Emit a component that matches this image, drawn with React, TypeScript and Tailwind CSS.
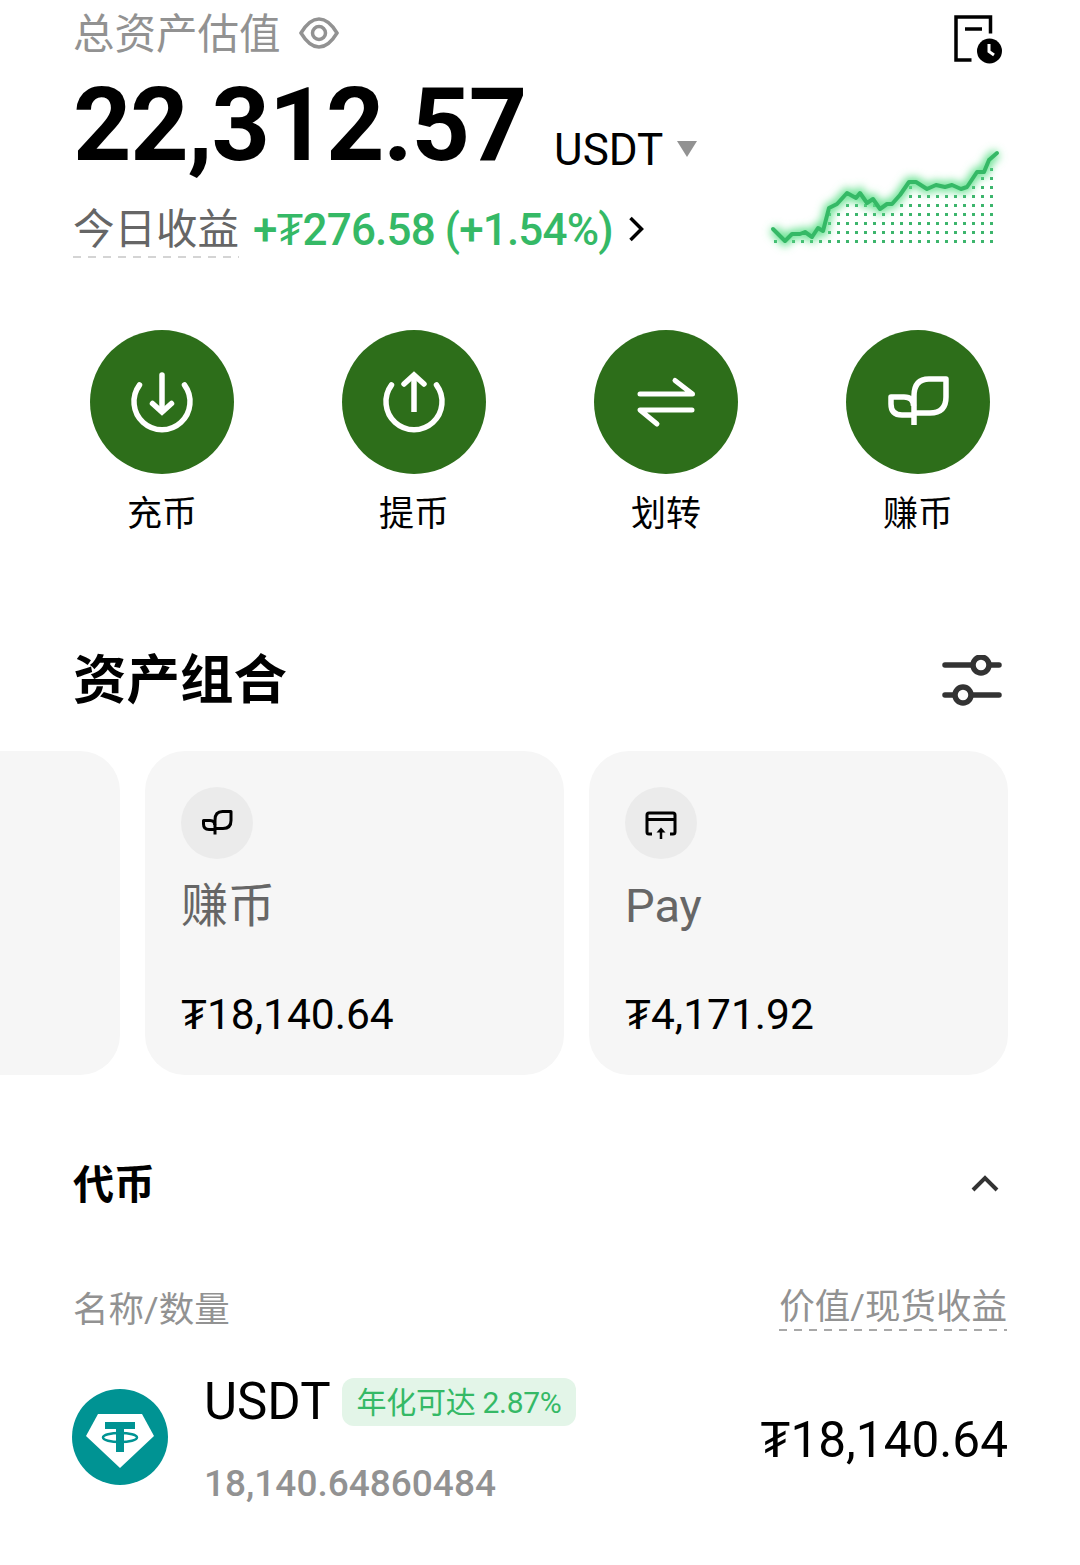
import { ReactNode } from "react";

const sans = "font-['Roboto','Noto_Sans_CJK_SC',sans-serif]";

// sparkline points for today's earnings
const line: [number, number][] = [
  [23, 229], [35, 241], [42, 234], [50, 234], [55, 232], [62, 237], [68, 228], [73, 231],
  [79, 208], [87, 204], [97, 193], [106, 198], [110, 193], [117, 203], [123, 199], [130, 209],
  [137, 204], [142, 204], [150, 195], [159, 182], [166, 182], [177, 189], [186, 185], [195, 187],
  [202, 185], [211, 189], [217, 187], [227, 172], [234, 172], [239, 160], [247, 153],
];

const lineY = (x: number) => {
  for (let i = 0; i < line.length - 1; i++) {
    const [x0, y0] = line[i];
    const [x1, y1] = line[i + 1];
    if (x >= x0 && x <= x1) return y0 + ((y1 - y0) * (x - x0)) / (x1 - x0);
  }
  return 0;
};

const dots: [number, number][] = [];
for (let col = 0; col < 25; col++) {
  for (let row = 0; row < 9; row++) {
    const x = 25.5 + col * 9;
    const y = 241.5 - row * 9;
    if (y > lineY(x) + 4) dots.push([x, y]);
  }
}

const Sparkline = () => (
  <svg width="240" height="110" viewBox="15 145 240 110" className="overflow-visible">
    <defs>
      <filter id="glow" x="-10%" y="-30%" width="120%" height="160%">
        <feGaussianBlur stdDeviation="4.500" />
      </filter>
    </defs>
    {dots.map(([x, y]) => (
      <rect key={`${x}-${y}`} x={x - 1.5} y={y - 1.5} width="3" height="3" fill="#3cb56c" />
    ))}
    <polyline
      points={line.map((p) => p.join(",")).join(" ")}
      fill="none"
      stroke="#5fe08a"
      strokeWidth="9"
      filter="url(#glow)"
    />
    <polyline
      points={line.map((p) => p.join(",")).join(" ")}
      fill="none"
      stroke="#35b966"
      strokeWidth="4"
      strokeLinejoin="round"
      strokeLinecap="round"
    />
  </svg>
);

const RecordIcon = () => (
  <svg width="50" height="50" viewBox="0 0 50 50" className="shrink-0">
    <path d="M17.5 45H2V2h34.500v16.500" fill="none" stroke="#000" strokeWidth="3.500" />
    <path d="M11 14h17" stroke="#000" strokeWidth="3.500" fill="none" />
    <circle cx="35.500" cy="36" r="12.500" fill="#000" />
    <path d="M35 29v7.500l5 3.500" stroke="#fff" strokeWidth="3" fill="none" />
  </svg>
);

const DepositIcon = () => (
  <g fill="none" stroke="#fff" strokeWidth="5.500" strokeLinecap="round">
    <path d="M49.500 55A28 28 0 1 0 94.500 55" />
    <path d="M72 45v36" />
    <path d="M62.500 73.500 72 82l9.500-8.500" />
  </g>
);

const WithdrawIcon = () => (
  <g fill="none" stroke="#fff" strokeWidth="5.500" strokeLinecap="round">
    <path d="M49.500 55A28 28 0 1 0 94.500 55" />
    <path d="M72 45v37" strokeLinecap="butt" />
    <path d="M62 54l10-9 10 9" />
  </g>
);

const TransferIcon = () => (
  <g fill="none" stroke="#fff" strokeWidth="5" strokeLinecap="round" strokeLinejoin="round">
    <path d="M46 64h52.500L81 50.500" />
    <path d="M98 80H46l17 14" />
  </g>
);

// two-leaf sprout, shared by the action button and the card badge
const LeafIcon = ({ color = "#fff", width = 5.5 }: { color?: string; width?: number }) => (
  <g fill="none" stroke={color} strokeWidth={width} strokeLinejoin="round">
    <path d="M68 95V66q0-17 15-17h17v18q0 16-16 16H68" />
    <path d="M67.500 85H56q-11 0-11-11v-7h13q9.500 0 9.500 9" />
  </g>
);

const PayIcon = () => (
  <g fill="none" stroke="#000" strokeWidth="3">
    <path d="M27 47h-3a2 2 0 0 1-2-2V28a2 2 0 0 1 2-2h24a2 2 0 0 1 2 2v17a2 2 0 0 1-2 2h-3" />
    <path d="M22 32.500h28" />
    <path d="M36 52v-7" strokeWidth="2.500" />
    <path d="M31.500 45.500h9L36 40.500z" fill="#000" stroke="none" />
  </g>
);

const ActionButton = ({ label, children }: { label: string; children: ReactNode }) => (
  <div className="flex w-[252px] flex-col items-center">
    <svg width="144" height="144" viewBox="0 0 144 144">
      <circle cx="72" cy="72" r="72" fill="#2d6e1a" />
      {children}
    </svg>
    <span className="mt-[21px] text-[35px] leading-[40px] text-black">{label}</span>
  </div>
);

const AssetCard = ({ label, value, children }: { label: string; value: string; children: ReactNode }) => (
  <div className="flex h-[324px] w-[419px] shrink-0 flex-col rounded-[40px] bg-[#f6f6f6] pl-[36px] pt-[36px]">
    <svg width="72" height="72" viewBox="0 0 72 72">
      <circle cx="36" cy="36" r="36" fill="#ebebeb" />
      {children}
    </svg>
    <span className="mt-[17px] text-[47px] leading-[60px] text-[#666]">{label}</span>
    <span className="mt-[54px] text-[42.5px] leading-[50px] text-black">{value}</span>
  </div>
);

const DashedRule = ({ color }: { color: string }) => (
  <div className={`h-[2px] w-full ${color}`} />
);

export default function App() {
  return (
    <div className={`h-[1565px] w-[1080px] overflow-hidden bg-white ${sans}`}>
      {/* balance header */}
      <div className="flex h-[270px] justify-between pl-[73px] pr-[76px]">
        <div className="flex flex-col">
          <div className="flex h-[66px] items-center gap-[18px]">
            <span className="mt-[3px] text-[41.5px] leading-[66px] text-[#929292]">总资产估值</span>
            <svg width="40" height="32" viewBox="0 0 40 32" fill="none" stroke="#929292" strokeWidth="3.500">
              <path d="M2 16C8 6 14 2 20 2s12 4 18 14c-6 10-12 14-18 14S8 26 2 16z" />
              <circle cx="20" cy="16" r="6.500" />
            </svg>
          </div>
          <div className="mt-[4px] flex h-[110px] items-end">
            <span className="text-[102px] font-bold leading-[110px] tracking-[-1.25px] text-black">22,312.57</span>
            <span className="mb-[5px] ml-[28px] text-[44px] leading-[50px] text-black">USDT</span>
            <svg className="mb-[23px] ml-[14px]" width="20" height="16" viewBox="0 0 20 16">
              <path d="M0 0h20L10 16z" fill="#929292" />
            </svg>
          </div>
          <div className="mt-[23px] flex items-center">
            <div className="flex flex-col">
              <span className="text-[41.5px] leading-[53px] text-[#666]">今日收益</span>
              <DashedRule color="bg-[repeating-linear-gradient(90deg,#d4d4d4_0_8px,transparent_8px_15px)]" />
            </div>
            <span className="mb-[1px] ml-[14px] text-[44px] font-medium leading-[54px] tracking-[-0.85px] text-[#35b966]">
              +₮276.58 (+1.54%)
            </span>
            <svg className="mb-[4px] ml-[15px]" width="16" height="28" viewBox="0 0 16 28" fill="none" stroke="#000" strokeWidth="3.500">
              <path d="M2.500 3l11 11-11 11" />
            </svg>
          </div>
        </div>
        <div className="flex flex-col items-end">
          <div className="mt-[15px]">
            <RecordIcon />
          </div>
          <div className="mr-[-1px] mt-[80px]">
            <Sparkline />
          </div>
        </div>
      </div>

      {/* quick actions */}
      <div className="mt-[60px] flex px-[36px]">
        <ActionButton label="充币"><DepositIcon /></ActionButton>
        <ActionButton label="提币"><WithdrawIcon /></ActionButton>
        <ActionButton label="划转"><TransferIcon /></ActionButton>
        <ActionButton label="赚币"><LeafIcon /></ActionButton>
      </div>

      {/* portfolio */}
      <div className="mt-[116px] flex h-[60px] items-center justify-between pl-[73px] pr-[76px]">
        <span className="text-[53.5px] font-bold leading-[60px] text-black">资产组合</span>
        <svg width="64" height="52" viewBox="0 0 64 52" fill="none" stroke="#333" strokeWidth="5.500" strokeLinecap="round">
          <path d="M5 10h54M5 40h54" />
          <circle cx="41" cy="10" r="8" fill="#fff" />
          <circle cx="23" cy="40" r="8" fill="#fff" />
        </svg>
      </div>
      <div className="ml-[-274px] mt-[40px] flex gap-[25px]">
        <div className="h-[324px] w-[394px] shrink-0 rounded-[40px] bg-[#f6f6f6]" />
        <AssetCard label="赚币" value="₮18,140.64">
          <g transform="scale(0.5)">
            <LeafIcon color="#000" width={6} />
          </g>
        </AssetCard>
        <AssetCard label="Pay" value="₮4,171.92">
          <PayIcon />
        </AssetCard>
      </div>

      {/* tokens */}
      <div className="mt-[80px] flex h-[60px] items-center justify-between pl-[73px] pr-[80px]">
        <span className="text-[41px] font-bold leading-[60px] text-black">代币</span>
        <svg width="30" height="20" viewBox="0 0 30 20" fill="none" stroke="#333" strokeWidth="4">
          <path d="M3 15L15 3l12 12" />
        </svg>
      </div>
      <div className="mt-[70px] flex items-start justify-between pl-[73px] pr-[73px]">
        <span className="text-[35.5px] leading-[50px] text-[#929292]">名称/数量</span>
        <div className="flex flex-col">
          <span className="text-[35.5px] leading-[44px] text-[#929292]">价值/现货收益</span>
          <DashedRule color="bg-[repeating-linear-gradient(90deg,#a8a8a8_0_8px,transparent_8px_15px)]" />
        </div>
      </div>
      <div className="mt-[37px] flex items-start justify-between pl-[72px] pr-[72px]">
        <div className="flex items-start gap-[36px]">
          <svg className="mt-[17px]" width="96" height="96" viewBox="0 0 96 96">
            <circle cx="48" cy="48" r="48" fill="#009393" />
            <path d="M26 25h44l12 22-34 32-34-32z" fill="#fff" />
            <path d="M33 33h30v7H52v23h-8V40H33z" fill="#009393" />
            <ellipse cx="48" cy="48.500" rx="17" ry="4.500" fill="none" stroke="#009393" strokeWidth="2.500" />
          </svg>
          <div className="flex flex-col">
            <div className="flex items-center gap-[11px]">
              <span className="text-[51px] leading-[60px] text-black">USDT</span>
              <span className="flex h-[48px] items-center rounded-[12px] bg-[#e3f5e8] pl-[15px] pr-[14px] text-[30px] tracking-[-0.3px] text-[#35b966]">
                年化可达 2.87%
              </span>
            </div>
            <span className="mt-[29px] text-[37px] font-medium leading-[46px] text-[#929292]">18,140.64860484</span>
          </div>
        </div>
        <span className="self-center text-[49.5px] leading-[60px] text-black">₮18,140.64</span>
      </div>
    </div>
  );
}
